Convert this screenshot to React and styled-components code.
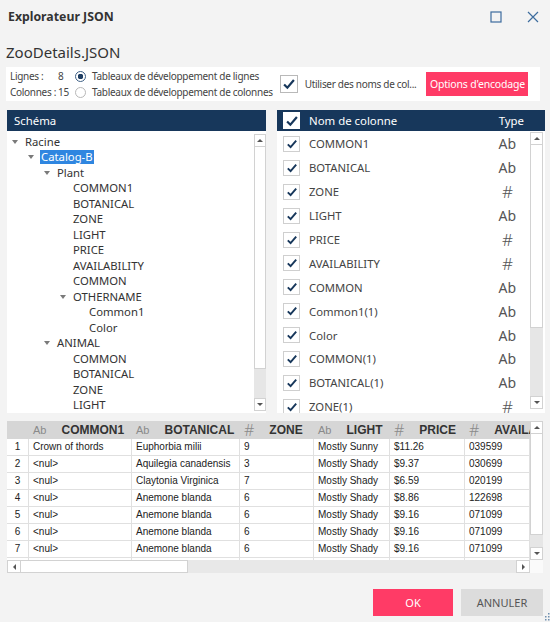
import React from 'react'
import styled, { createGlobalStyle } from 'styled-components'

const GlobalStyle = createGlobalStyle`
  html, body { margin: 0; padding: 0; background: #f3f3f3; }
  body { font-family: "Noto Sans", "Open Sans", sans-serif; color: #333; }
  * { box-sizing: border-box; }
`

const NAVY = '#17375b'
const PINK = '#ff3b66'

const treeItems = [
  { label: 'Racine', level: 0, open: true },
  { label: 'Catalog-B', level: 1, open: true, selected: true },
  { label: 'Plant', level: 2, open: true },
  { label: 'COMMON1', level: 3 },
  { label: 'BOTANICAL', level: 3 },
  { label: 'ZONE', level: 3 },
  { label: 'LIGHT', level: 3 },
  { label: 'PRICE', level: 3 },
  { label: 'AVAILABILITY', level: 3 },
  { label: 'COMMON', level: 3 },
  { label: 'OTHERNAME', level: 3, open: true },
  { label: 'Common1', level: 4 },
  { label: 'Color', level: 4 },
  { label: 'ANIMAL', level: 2, open: true },
  { label: 'COMMON', level: 3 },
  { label: 'BOTANICAL', level: 3 },
  { label: 'ZONE', level: 3 },
  { label: 'LIGHT', level: 3 },
]

const columns = [
  ['COMMON1', 'Ab'], ['BOTANICAL', 'Ab'], ['ZONE', '#'], ['LIGHT', 'Ab'],
  ['PRICE', '#'], ['AVAILABILITY', '#'], ['COMMON', 'Ab'], ['Common1(1)', 'Ab'],
  ['Color', 'Ab'], ['COMMON(1)', 'Ab'], ['BOTANICAL(1)', 'Ab'], ['ZONE(1)', '#'],
]

const gridHeader = [
  ['Ab', 'COMMON1'], ['Ab', 'BOTANICAL'], ['#', 'ZONE'], ['Ab', 'LIGHT'],
  ['#', 'PRICE'], ['#', 'AVAILABILITY'],
]

const gridRows = [
  ['1', 'Crown of thords', 'Euphorbia milii', '9', 'Mostly Sunny', '$11.26', '039599'],
  ['2', '<nul>', 'Aquilegia canadensis', '3', 'Mostly Shady', '$9.37', '030699'],
  ['3', '<nul>', 'Claytonia Virginica', '7', 'Mostly Shady', '$6.59', '020199'],
  ['4', '<nul>', 'Anemone blanda', '6', 'Mostly Shady', '$8.86', '122698'],
  ['5', '<nul>', 'Anemone blanda', '6', 'Mostly Shady', '$9.16', '071099'],
  ['6', '<nul>', 'Anemone blanda', '6', 'Mostly Shady', '$9.16', '071099'],
  ['7', '<nul>', 'Anemone blanda', '6', 'Mostly Shady', '$9.16', '071099'],
  ['8', '<nul>', 'Anemone blanda', '6', 'Mostly Shady', '$9.16', '071099'],
]

function CheckMark({ size = 12, color = NAVY }) {
  return (
    <svg width={size} height={size} viewBox="0 0 12 12">
      <path d="M1.8 6.4 L4.6 9.2 L10.2 2.6" fill="none" stroke={color} strokeWidth="1.9" />
    </svg>
  )
}

function App() {
  return (
    <Window>
      <GlobalStyle />
      <TitleBar>
        <Title>Explorateur JSON</Title>
        <WinButtons>
          <WinButton aria-label="Agrandir">
            <svg width="12" height="12" viewBox="0 0 12 12">
              <rect x="1" y="1" width="10" height="10" fill="none" stroke="#3d6c9e" strokeWidth="1.2" />
            </svg>
          </WinButton>
          <WinButton aria-label="Fermer">
            <svg width="12" height="12" viewBox="0 0 12 12">
              <path d="M1 1 L11 11 M11 1 L1 11" stroke="#3d6c9e" strokeWidth="1.2" />
            </svg>
          </WinButton>
        </WinButtons>
      </TitleBar>

      <FileName>ZooDetails.JSON</FileName>

      <OptionsBar>
        <Stats>
          <span>Lignes :</span><span>8</span>
          <span>Colonnes :</span><span>15</span>
        </Stats>
        <RadioGroup>
          <RadioRow><Radio $checked />Tableaux de développement de lignes</RadioRow>
          <RadioRow><Radio />Tableaux de développement de colonnes</RadioRow>
        </RadioGroup>
        <BigCheck><CheckMark size={14} /></BigCheck>
        <OptionLabel>Utiliser des noms de col...</OptionLabel>
        <PinkButton $small>Options d'encodage</PinkButton>
      </OptionsBar>

      <Panels>
        <Panel>
          <PanelHeader>Schéma</PanelHeader>
          <PanelBody>
            <TreeList>
              {treeItems.map((it, i) => (
                <TreeRow key={i} $level={it.level}>
                  <Expander>{it.open && <Caret />}</Expander>
                  <TreeLabel $selected={it.selected}>{it.label}</TreeLabel>
                </TreeRow>
              ))}
            </TreeList>
            <VScroll $width={12} $thumb={222} $mt={3} $mb={2} />
          </PanelBody>
        </Panel>

        <Panel>
          <PanelHeader $pad={6}>
            <HeaderCheck><CheckMark size={14} /></HeaderCheck>
            <HeaderName>Nom de colonne</HeaderName>
            <HeaderType>Type</HeaderType>
          </PanelHeader>
          <PanelBody>
            <ColumnList>
              {columns.map(([name, type], i) => (
                <ColumnRow key={i}>
                  <SmallCheck><CheckMark size={12} /></SmallCheck>
                  <ColumnName>{name}</ColumnName>
                  <TypeTag $hash={type === '#'}>{type}</TypeTag>
                </ColumnRow>
              ))}
            </ColumnList>
            <VScroll $width={13} $thumb={183} $mt={1} $mb={4} $mr={2} />
          </PanelBody>
        </Panel>
      </Panels>

      <GridWrap>
        <GridTable>
          <GridRow $head>
            <HeadCell />
            {gridHeader.map(([type, name], i) => (
              <HeadCell key={i}>
                <HeadType $hash={type === '#'}>{type}</HeadType>
                <HeadName>{name}</HeadName>
              </HeadCell>
            ))}
          </GridRow>
          {gridRows.map((row) => (
            <GridRow key={row[0]}>
              {row.map((v, j) => (
                <Cell key={j} $num={j === 0}>{v}</Cell>
              ))}
            </GridRow>
          ))}
        </GridTable>
        <VScroll $width={13} $thumb={101} />
        <HScroll>
          <ScrollArrow $dir="left" />
          <HThumb />
          <HTrack />
          <ScrollArrow $dir="right" />
        </HScroll>
        <Corner />
      </GridWrap>

      <Footer>
        <PinkButton $wide>OK</PinkButton>
        <GrayButton>ANNULER</GrayButton>
      </Footer>

      <Grip>
        <svg width="6" height="10" viewBox="0 0 6 10">
          {[[4, 1], [4, 4], [1, 4], [4, 7], [1, 7]].map(([x, y], i) => (
            <rect key={i} x={x} y={y} width="1.5" height="1.5" fill="#6f8fb0" />
          ))}
        </svg>
      </Grip>
    </Window>
  )
}

function VScroll({ $width, $thumb, $mt = 0, $mb = 0, $mr = 0 }) {
  return (
    <VBar $width={$width} $mt={$mt} $mb={$mb} $mr={$mr}>
      <ScrollArrow $dir="up" />
      <VThumb style={{ height: $thumb }} />
      <VTrack />
      <ScrollArrow $dir="down" />
    </VBar>
  )
}

const Window = styled.div`
  position: relative;
  width: 550px;
  height: 622px;
  display: flex;
  flex-direction: column;
  overflow: hidden;
  background: #f3f3f3;
`

const TitleBar = styled.div`
  height: 33px;
  display: flex;
  align-items: center;
  padding: 0 2px 0 8px;
`

const Title = styled.div`
  flex: 1;
  font-size: 12.3px;
  font-weight: 700;
  color: #333;
`

const WinButtons = styled.div`
  display: flex;
  gap: 7px;
`

const WinButton = styled.button`
  width: 30px;
  height: 24px;
  padding: 0;
  border: 0;
  background: none;
  display: flex;
  align-items: center;
  justify-content: center;
`

const FileName = styled.div`
  margin: 8px 0 0 6px;
  height: 22px;
  line-height: 22px;
  font-size: 15px;
  color: #333;
`

const OptionsBar = styled.div`
  margin: 4px 10px 0 6px;
  height: 34px;
  background: #fff;
  display: flex;
  align-items: center;
  padding-left: 4px;
  font-size: 10px;
  letter-spacing: -0.3px;
  color: #444;
  white-space: nowrap;
`

const Stats = styled.div`
  display: grid;
  grid-template-columns: max-content 16px;
  column-gap: 2px;
  grid-auto-rows: 16px;
  align-items: center;
`

const RadioGroup = styled.div`
  display: flex;
  flex-direction: column;
  margin-left: 1px;
`

const RadioRow = styled.div`
  height: 16px;
  display: flex;
  align-items: center;
  gap: 6px;
`

const Radio = styled.span`
  width: 11px;
  height: 11px;
  border-radius: 50%;
  border: 1px solid ${(p) => (p.$checked ? '#3d5f85' : '#b8b8b8')};
  background: ${(p) => (p.$checked ? `radial-gradient(circle, #1f3e63 0 2.6px, #fff 3px)` : '#fff')};
`

const BigCheck = styled.span`
  margin-left: 7px;
  width: 18px;
  height: 18px;
  border: 1px solid #b9b9b9;
  background: #fff;
  display: flex;
  align-items: center;
  justify-content: center;
`

const OptionLabel = styled.span`
  margin-left: 7px;
`

const PinkButton = styled.button`
  border: 0;
  background: ${PINK};
  color: #fff;
  font-family: inherit;
  font-size: ${(p) => (p.$small ? '10.5px' : '11px')};
  letter-spacing: ${(p) => (p.$small ? '-0.2px' : '0')};
  white-space: nowrap;
  padding: 0;
  margin-left: ${(p) => (p.$small ? '10px' : '0')};
  width: ${(p) => (p.$wide ? '80px' : '102px')};
  height: ${(p) => (p.$small ? '24px' : '27px')};
`

const Panels = styled.div`
  margin: 9px 0 0 7px;
  height: 303px;
  display: grid;
  grid-template-columns: 259px 268px;
  column-gap: 11px;
`

const Panel = styled.div`
  display: flex;
  flex-direction: column;
  min-height: 0;
`

const PanelHeader = styled.div`
  height: 21px;
  flex: none;
  background: ${NAVY};
  color: #fff;
  font-size: 11.4px;
  display: flex;
  align-items: center;
  padding-left: ${(p) => p.$pad ?? 7}px;
`

const PanelBody = styled.div`
  flex: 1;
  min-height: 0;
  background: #fff;
  display: flex;
`

const TreeList = styled.div`
  flex: 1;
  padding-top: 3px;
  overflow: hidden;
`

const TreeRow = styled.div`
  height: 15.5px;
  display: flex;
  align-items: center;
  padding-left: ${(p) => 2 + p.$level * 16}px;
  font-size: 11.3px;
  color: #333;
  white-space: nowrap;
`

const Expander = styled.span`
  width: 16px;
  flex: none;
  display: flex;
  align-items: center;
  padding-left: 3px;
`

const Caret = styled.span`
  width: 0;
  height: 0;
  border-left: 3.5px solid transparent;
  border-right: 3.5px solid transparent;
  border-top: 4px solid #7a7a7a;
`

const TreeLabel = styled.span`
  line-height: 14px;
  padding: 0 1px;
  margin-left: -1px;
  background: ${(p) => (p.$selected ? '#2f86e0' : 'transparent')};
  color: ${(p) => (p.$selected ? '#fff' : '#333')};
`

const HeaderCheck = styled.span`
  width: 17px;
  height: 17px;
  background: #fff;
  display: flex;
  align-items: center;
  justify-content: center;
`

const HeaderName = styled.span`
  flex: 1;
  margin-left: 9px;
`

const HeaderType = styled.span`
  margin-right: 21px;
`

const ColumnList = styled.div`
  flex: 1;
  overflow: hidden;
  padding-top: 1px;
`

const ColumnRow = styled.div`
  height: 23.9px;
  display: flex;
  align-items: center;
  padding: 0 14px 0 6px;
  font-size: 11.3px;
  color: #444;
`

const SmallCheck = styled.span`
  width: 17px;
  height: 16px;
  border: 1px solid #cfcfcf;
  display: flex;
  align-items: center;
  justify-content: center;
`

const ColumnName = styled.span`
  flex: 1;
  margin-left: 9px;
`

const TypeTag = styled.span`
  font-size: ${(p) => (p.$hash ? '17px' : '14px')};
  font-weight: ${(p) => (p.$hash ? 300 : 400)};
  color: #555;
  padding-right: ${(p) => (p.$hash ? '3px' : '0')};
`

const VBar = styled.div`
  width: ${(p) => p.$width}px;
  flex: none;
  display: flex;
  flex-direction: column;
  margin: ${(p) => `${p.$mt}px ${p.$mr}px ${p.$mb}px 0`};
  background: #e8e8e8;
`

const ScrollArrow = styled.span`
  flex: none;
  width: ${(p) => (p.$dir === 'left' || p.$dir === 'right' ? '14px' : '100%')};
  height: ${(p) => (p.$dir === 'left' || p.$dir === 'right' ? '100%' : '13px')};
  background: #fff;
  border: 1px solid #d2d2d2;
  display: flex;
  align-items: center;
  justify-content: center;
  &::after {
    content: '';
    width: 0;
    height: 0;
    border: 3px solid transparent;
    ${(p) => p.$dir === 'up' && 'border-bottom: 3px solid #555; border-top-width: 0;'}
    ${(p) => p.$dir === 'down' && 'border-top: 3px solid #555; border-bottom-width: 0;'}
    ${(p) => p.$dir === 'left' && 'border-right: 3px solid #555; border-left-width: 0;'}
    ${(p) => p.$dir === 'right' && 'border-left: 3px solid #555; border-right-width: 0;'}
  }
`

const VThumb = styled.span`
  flex: none;
  background: #fff;
  border: 1px solid #d2d2d2;
  border-top: 0;
`

const VTrack = styled.span`
  flex: 1;
  background: #e6e6e6;
`

const GridWrap = styled.div`
  margin: 8px 7px 0 7px;
  height: 152px;
  display: grid;
  grid-template-columns: 1fr 13px;
  grid-template-rows: 1fr 13px;
  background: #fff;
`

const GridTable = styled.div`
  overflow: hidden;
  font-family: "Liberation Sans", Arial, sans-serif;
`

const GridRow = styled.div`
  display: grid;
  grid-template-columns: 22px 103px 108px 74px 76px 75px 1fr;
  height: ${(p) => (p.$head ? '18px' : '17px')};
  background: ${(p) => (p.$head ? '#d6d6d6' : '#fff')};
`

const HeadCell = styled.div`
  display: flex;
  align-items: center;
  gap: 15px;
  padding-left: 4px;
  overflow: hidden;
  white-space: nowrap;
`

const HeadType = styled.span`
  font-family: ${(p) => (p.$hash ? '"Noto Sans", sans-serif' : 'inherit')};
  font-size: ${(p) => (p.$hash ? '16px' : '11px')};
  font-weight: 300;
  color: #8a8a8a;
  line-height: 1;
`

const HeadName = styled.span`
  font-size: 12px;
  font-weight: 700;
  color: #333;
`

const Cell = styled.div`
  font-size: 10px;
  color: #222;
  line-height: 16px;
  padding-left: ${(p) => (p.$num ? 0 : 4)}px;
  text-align: ${(p) => (p.$num ? 'center' : 'left')};
  border-right: 1px solid #e0e0e0;
  border-bottom: 1px solid #e0e0e0;
  white-space: nowrap;
  overflow: hidden;
`

const HScroll = styled.div`
  display: flex;
  background: #e8e8e8;
`

const HThumb = styled.span`
  width: 167px;
  background: #fff;
  border: 1px solid #d2d2d2;
  border-left: 0;
`

const HTrack = styled.span`
  flex: 1;
`

const Corner = styled.div`
  background: #fafafa;
`

const Footer = styled.div`
  display: flex;
  justify-content: flex-end;
  gap: 8px;
  padding: 16px 7px 0 0;
`

const GrayButton = styled.button`
  width: 82px;
  height: 27px;
  border: 0;
  padding: 0;
  background: #dcdcdc;
  color: #555;
  font-family: inherit;
  font-size: 11px;
`

const Grip = styled.div`
  position: absolute;
  right: 0;
  bottom: 0;
  line-height: 0;
`

export default App
